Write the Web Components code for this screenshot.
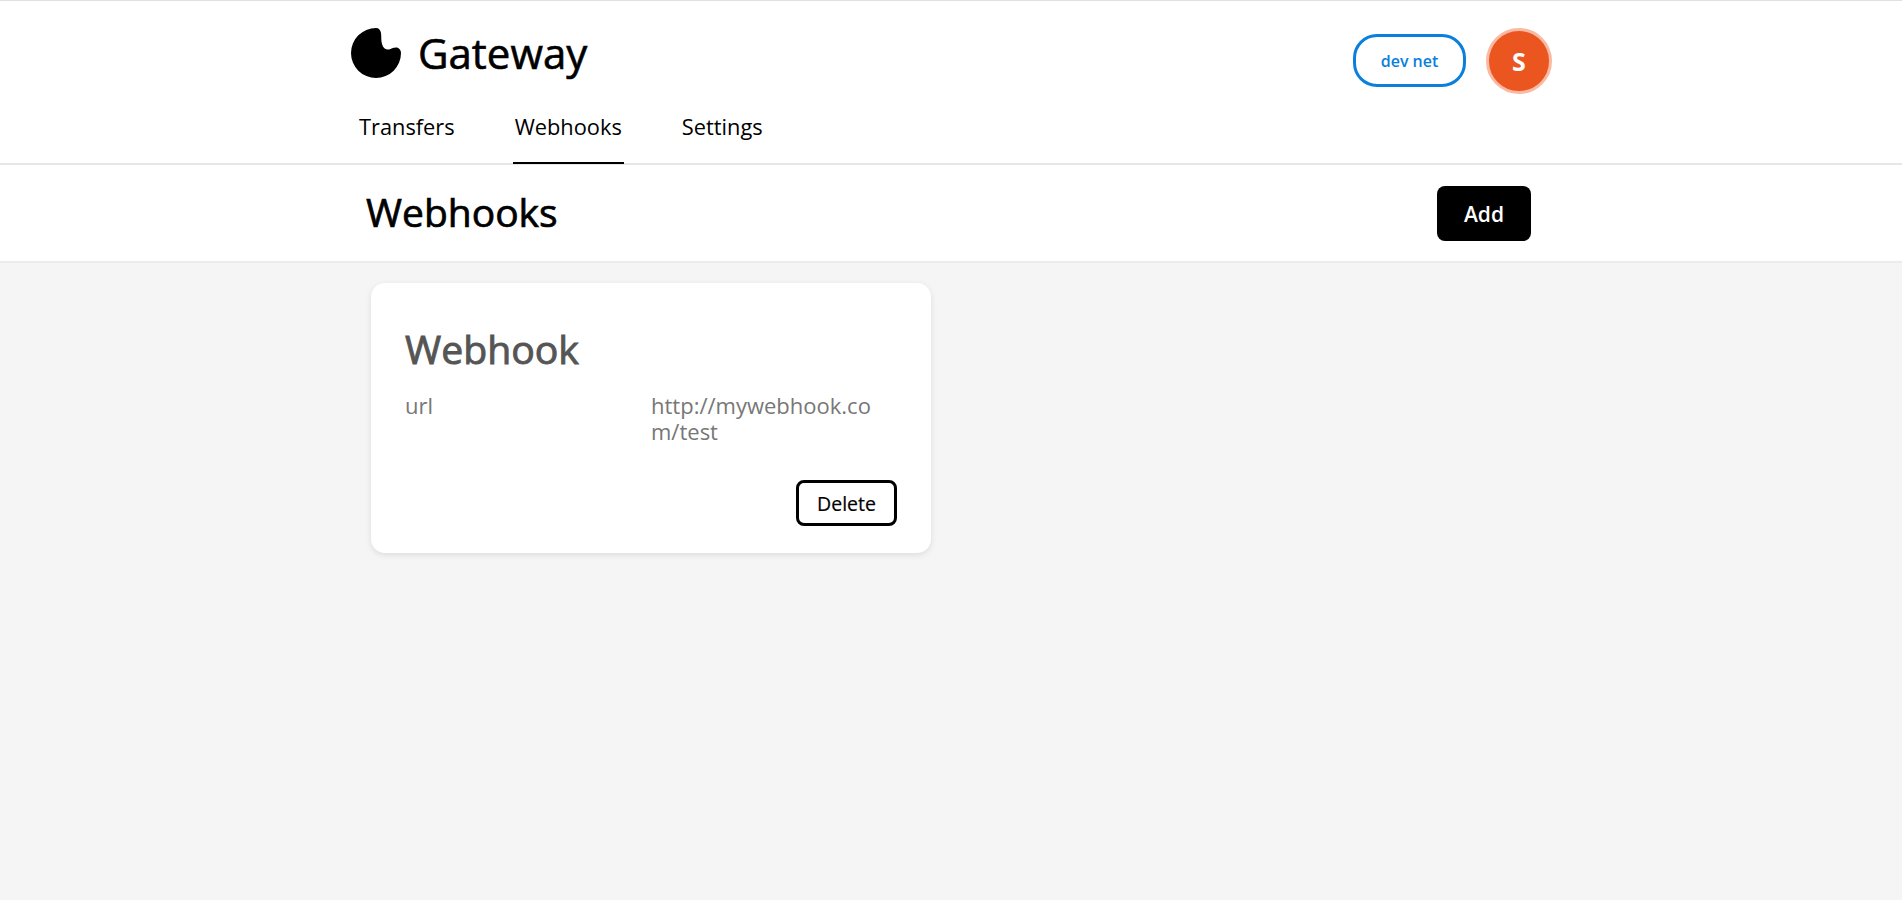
<!DOCTYPE html>
<html lang="en">
<head>
<meta charset="utf-8">
<title>Gateway</title>
<style>
    html,body{ margin:0; height:100%; }
    body{
        background:#f5f5f5;
        font-family:"Open Sans","Noto Sans",sans-serif;
        color:#000;
    }
</style>
</head>
<body>
<gw-header active="Webhooks"></gw-header>
<gw-page-bar title="Webhooks"></gw-page-bar>
<gw-content>
    <gw-webhook-card name="Webhook" url="http://mywebhook.com/test"></gw-webhook-card>
</gw-content>

<script>
class GwHeader extends HTMLElement {
    constructor() {
        super();
        const shadowRoot = this.attachShadow({ mode: 'open' });
        const active = this.getAttribute('active');
        const links = ['Transfers','Webhooks','Settings'].map(name =>
            `<a class="${name===active?'on':''}">${name}</a>`).join('');
        shadowRoot.innerHTML = `
        <style>
        :host{
            display:block;
            background:#fff;
            border-top:1px solid #e0e0e0;
            border-bottom:2px solid #e6e6e6;
            height:162px;
            box-sizing:content-box;
        }
        .wrap{
            width:1200px;
            margin:0 auto;
            height:100%;
            display:flex;
            flex-direction:column;
        }
        .top{
            display:flex;
            justify-content:space-between;
            height:107px;
        }
        .brand{
            display:flex;
            align-items:flex-start;
            gap:17px;
            padding-top:27px;
        }
        .brand svg{ width:50px; height:50px; display:block; }
        .brand span{
            font-size:42px;
            line-height:50px;
            -webkit-text-stroke:.6px #000;
        }
        .side{
            display:flex;
            align-items:flex-start;
            gap:20px;
            padding-top:27px;
            margin-right:-1px;
        }
        .net{
            box-sizing:border-box;
            width:113px;
            height:53px;
            margin-top:6px;
            border:3px solid #0a7fdc;
            border-radius:24px;
            color:#0a7fdc;
            font-size:16px;
            font-weight:600;
            display:flex;
            align-items:center;
            justify-content:center;
        }
        .avatar{
            box-sizing:border-box;
            width:66px;
            height:66px;
            border-radius:50%;
            background:#eb5520;
            border:3px solid #f9b9a2;
            color:#fff;
            font-size:25px;
            font-weight:700;
            display:flex;
            align-items:center;
            justify-content:center;
        }
        nav{
            display:flex;
            gap:56px;
            flex:1;
            padding-left:6px;
        }
        a{
            box-sizing:border-box;
            height:calc(100% + 1px);
            padding:0 2px;
            font-size:21.8px;
            line-height:38px;
        }
        a.on{ border-bottom:2px solid #000; }
        </style>
        <div class="wrap">
            <div class="top">
                <div class="brand">
                    <svg viewBox="0 0 50 50"><path fill="#000" d="M25 0C28 0 29.5 2 30 5C30.5 9 30 13 31 16C32 20 35 22 38 21.5C40 21 42 19.5 45 19.5C48 19.5 50 22 50 25A25 25 0 1 1 25 0Z"/></svg>
                    <span>Gateway</span>
                </div>
                <div class="side">
                    <div class="net">dev net</div>
                    <div class="avatar">S</div>
                </div>
            </div>
            <nav>${links}</nav>
        </div>
        `
    }
}

class GwPageBar extends HTMLElement {
    constructor() {
        super();
        const shadowRoot = this.attachShadow({ mode: 'open' });
        shadowRoot.innerHTML = `
        <style>
        :host{
            display:block;
            background:#fff;
            height:96px;
            border-bottom:2px solid #ececec;
        }
        .wrap{
            box-sizing:border-box;
            width:1200px;
            height:100%;
            margin:0 auto;
            padding:21px 20px 0 15px;
            display:flex;
            justify-content:space-between;
            align-items:flex-start;
        }
        h1{
            margin:1px 0 0;
            font-size:39px;
            line-height:50px;
            font-weight:400;
            -webkit-text-stroke:.7px #000;
        }
        button{
            width:94px;
            height:55px;
            border:0;
            border-radius:8px;
            background:#000;
            color:#fff;
            font:600 21px "Open Sans","Noto Sans",sans-serif;
        }
        </style>
        <div class="wrap">
            <h1>${this.getAttribute('title')}</h1>
            <button>Add</button>
        </div>
        `
    }
}

class GwContent extends HTMLElement {
    constructor() {
        super();
        const shadowRoot = this.attachShadow({ mode: 'open' });
        shadowRoot.innerHTML = `
        <style>
        :host{
            display:block;
            box-sizing:border-box;
            width:1200px;
            margin:0 auto;
            padding:20px 20px;
        }
        </style>
        <slot></slot>
        `
    }
}

class GwWebhookCard extends HTMLElement {
    constructor() {
        super();
        const shadowRoot = this.attachShadow({ mode: 'open' });
        shadowRoot.innerHTML = `
        <style>
        :host{
            display:block;
            box-sizing:border-box;
            width:560px;
            height:270px;
            padding:41px 34px 0;
            background:#fff;
            border-radius:14px;
            box-shadow:0 2px 6px rgba(0,0,0,.1);
        }
        h2{
            margin:0 0 18px;
            font-size:39.2px;
            line-height:50px;
            font-weight:400;
            color:#555;
            -webkit-text-stroke:.9px #555;
        }
        dl{
            margin:0;
            display:grid;
            grid-template-columns:246px 225px;
            font-size:22px;
            line-height:26px;
            color:#777;
        }
        dd{ margin:0; word-break:break-all; }
        .actions{
            display:flex;
            justify-content:flex-end;
            margin-top:36px;
        }
        button{
            box-sizing:border-box;
            width:101px;
            height:46px;
            background:#fff;
            border:3px solid #000;
            border-radius:8px;
            color:#000;
            font:400 19.5px "Open Sans","Noto Sans",sans-serif;
            -webkit-text-stroke:.2px #000;
        }
        </style>
        <h2>${this.getAttribute('name')}</h2>
        <dl>
            <dt>url</dt>
            <dd>${this.getAttribute('url')}</dd>
        </dl>
        <div class="actions"><button>Delete</button></div>
        `
    }
}

customElements.define('gw-header', GwHeader);
customElements.define('gw-page-bar', GwPageBar);
customElements.define('gw-content', GwContent);
customElements.define('gw-webhook-card', GwWebhookCard);
</script>
</body>
</html>
